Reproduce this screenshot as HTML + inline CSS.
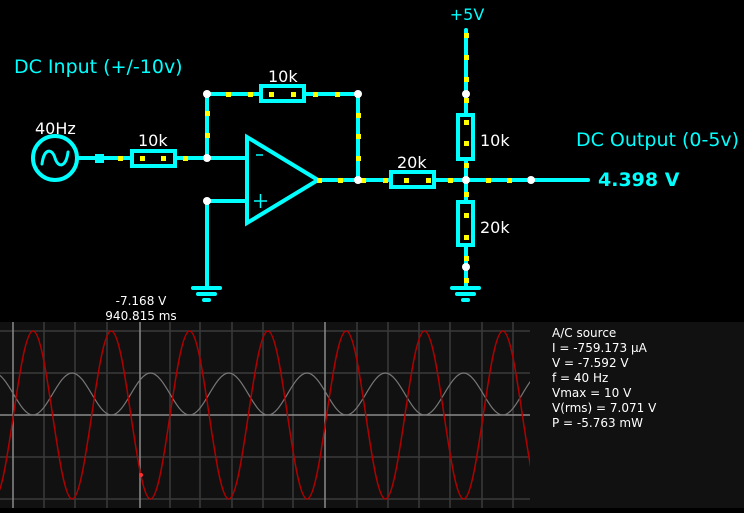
<!DOCTYPE html>
<html><head><meta charset="utf-8">
<style>
html,body{margin:0;padding:0;background:#000;}
body{width:744px;height:508px;overflow:hidden;}
svg text{font-family:"DejaVu Sans","Liberation Sans",sans-serif;}
</style></head><body>
<svg width="744" height="508" viewBox="0 0 744 508" xmlns="http://www.w3.org/2000/svg">
<rect width="744" height="508" fill="#000"/>
<!-- scope -->
<rect x="0" y="322" width="744" height="186" fill="#111"/>
<defs><clipPath id="sc"><rect x="0" y="322" width="530" height="186"/></clipPath></defs>
<g clip-path="url(#sc)">
<g stroke="#3a3a3a" stroke-width="1.5">
<line x1="0" y1="331" x2="530" y2="331"/>
<line x1="0" y1="373" x2="530" y2="373"/>
<line x1="0" y1="457" x2="530" y2="457"/>
<line x1="0" y1="499" x2="530" y2="499"/>
<line x1="44" y1="322" x2="44" y2="508"/>
<line x1="75" y1="322" x2="75" y2="508"/>
<line x1="107" y1="322" x2="107" y2="508"/>
<line x1="170" y1="322" x2="170" y2="508"/>
<line x1="200" y1="322" x2="200" y2="508"/>
<line x1="232" y1="322" x2="232" y2="508"/>
<line x1="263" y1="322" x2="263" y2="508"/>
<line x1="293" y1="322" x2="293" y2="508"/>
<line x1="357" y1="322" x2="357" y2="508"/>
<line x1="388" y1="322" x2="388" y2="508"/>
<line x1="419" y1="322" x2="419" y2="508"/>
<line x1="450" y1="322" x2="450" y2="508"/>
<line x1="482" y1="322" x2="482" y2="508"/>
<line x1="513" y1="322" x2="513" y2="508"/>
</g>
<g stroke="#8a8a8a" stroke-width="1.5">
<line x1="0" y1="415" x2="530" y2="415"/>
<line x1="13" y1="322" x2="13" y2="508"/>
<line x1="140" y1="322" x2="140" y2="508"/>
<line x1="325" y1="322" x2="325" y2="508"/>
</g>
<path fill="none" stroke="#777" stroke-width="1.2" d="M-45.3,415 C-31.1,415 -20.4,373 -6.15,373 S18.8,415 33,415 S58,373 72.15,373 S97.1,415 111.3,415 S136.2,373 150.45,373 S175.4,415 189.6,415 S214.5,373 228.75,373 S253.7,415 267.9,415 S292.8,373 307.05,373 S332,415 346.2,415 S371.1,373 385.35,373 S410.3,415 424.5,415 S449.4,373 463.65,373 S488.6,415 502.8,415 S527.7,373 541.95,373"/>
<path fill="none" stroke="#b00000" stroke-width="1.5" d="M-45.3,331 C-31.1,331 -20.4,499 -6.15,499 S18.8,331 33,331 S58,499 72.15,499 S97.1,331 111.3,331 S136.2,499 150.45,499 S175.4,331 189.6,331 S214.5,499 228.75,499 S253.7,331 267.9,331 S292.8,499 307.05,499 S332,331 346.2,331 S371.1,499 385.35,499 S410.3,331 424.5,331 S449.4,499 463.65,499 S488.6,331 502.8,331 S527.7,499 541.95,499"/>
<circle cx="141" cy="475" r="2" fill="#ff3030"/>
</g>
<g fill="#fff" font-size="12">
<text x="141" y="305" text-anchor="middle">-7.168 V</text>
<text x="141" y="320" text-anchor="middle">940.815 ms</text>
<text x="552" y="337">A/C source</text>
<text x="552" y="352">I = -759.173 μA</text>
<text x="552" y="367">V = -7.592 V</text>
<text x="552" y="382">f = 40 Hz</text>
<text x="552" y="397">Vmax = 10 V</text>
<text x="552" y="412">V(rms) = 7.071 V</text>
<text x="552" y="427">P = -5.763 mW</text>
</g>

<!-- circuit -->
<g stroke="#00ffff" stroke-width="4" fill="none" stroke-linecap="round">
<circle cx="55" cy="158" r="22" stroke-width="4"/>
<path d="M42,164 C44,148 52,148 55,158 C58,168 66,168 68,152" stroke-width="3"/>
<line x1="77" y1="158" x2="207" y2="158"/>
<rect x="132" y="151" width="43" height="15" fill="#000"/>
<line x1="207" y1="94" x2="207" y2="158"/>
<line x1="207" y1="94" x2="358" y2="94"/>
<rect x="261" y="86" width="43" height="15" fill="#000"/>
<line x1="358" y1="94" x2="358" y2="180"/>
<line x1="207" y1="158" x2="247" y2="158"/>
<line x1="207" y1="201" x2="247" y2="201"/>
<line x1="207" y1="201" x2="207" y2="288"/>
<line x1="193" y1="288" x2="220" y2="288"/>
<line x1="198" y1="294" x2="215" y2="294"/>
<line x1="204" y1="300" x2="209" y2="300"/>
<polygon points="247,137 247,223 318,180" stroke-linejoin="miter"/>
<line x1="318" y1="180" x2="588" y2="180"/>
<rect x="391" y="172" width="43" height="15" fill="#000"/>
<line x1="466" y1="30" x2="466" y2="288"/>
<rect x="458" y="115" width="15" height="44" fill="#000"/>
<rect x="458" y="202" width="15" height="43" fill="#000"/>
<line x1="452" y1="288" x2="479" y2="288"/>
<line x1="457" y1="294" x2="474" y2="294"/>
<line x1="463" y1="300" x2="468" y2="300"/>
</g>
<g stroke="#00ffff" stroke-width="1.5">
<line x1="256" y1="155" x2="263" y2="155"/>
<line x1="254" y1="201" x2="267" y2="201"/>
<line x1="260.5" y1="194" x2="260.5" y2="208"/>
</g>
<rect x="95" y="154" width="9" height="9" fill="#00ffff"/>
<g fill="#ffff00">
<rect x="118" y="156" width="5" height="5"/><rect x="140" y="156" width="5" height="5"/><rect x="161" y="156" width="5" height="5"/><rect x="183" y="156" width="5" height="5"/>
<rect x="226" y="92" width="5" height="5"/><rect x="248" y="92" width="5" height="5"/><rect x="269" y="92" width="5" height="5"/><rect x="291" y="92" width="5" height="5"/><rect x="313" y="92" width="5" height="5"/><rect x="335" y="92" width="5" height="5"/>
<rect x="205" y="111" width="5" height="5"/><rect x="205" y="133" width="5" height="5"/>
<rect x="356" y="113" width="5" height="5"/><rect x="356" y="134" width="5" height="5"/><rect x="356" y="156" width="5" height="5"/>
<rect x="317" y="178" width="5" height="5"/><rect x="338" y="178" width="5" height="5"/><rect x="361" y="178" width="5" height="5"/><rect x="383" y="178" width="5" height="5"/><rect x="404" y="178" width="5" height="5"/><rect x="426" y="178" width="5" height="5"/><rect x="448" y="178" width="5" height="5"/><rect x="486" y="178" width="5" height="5"/><rect x="507" y="178" width="5" height="5"/>
<rect x="464" y="33" width="5" height="5"/><rect x="464" y="55" width="5" height="5"/><rect x="464" y="77" width="5" height="5"/><rect x="464" y="98" width="5" height="5"/><rect x="464" y="120" width="5" height="5"/><rect x="464" y="141" width="5" height="5"/><rect x="464" y="163" width="5" height="5"/><rect x="464" y="192" width="5" height="5"/><rect x="464" y="213" width="5" height="5"/><rect x="464" y="235" width="5" height="5"/><rect x="464" y="256" width="5" height="5"/><rect x="464" y="278" width="5" height="5"/>
</g>
<g fill="#fff">
<circle cx="207" cy="94" r="4"/><circle cx="358" cy="94" r="4"/><circle cx="207" cy="158" r="4"/><circle cx="207" cy="201" r="4"/>
<circle cx="358" cy="180" r="4"/><circle cx="466" cy="180" r="4"/><circle cx="531" cy="180" r="4"/><circle cx="466" cy="94" r="4"/><circle cx="466" cy="267" r="4"/>
</g>
<g fill="#00ffff">
<text x="467" y="20" font-size="16" text-anchor="middle">+5V</text>
<text x="14" y="73" font-size="19">DC Input (+/-10v)</text>
<text x="576" y="146" font-size="19">DC Output (0-5v)</text>
<text x="598" y="186" font-size="19" font-weight="bold">4.398 V</text>
</g>
<g fill="#fff" font-size="16">
<text x="35" y="134">40Hz</text>
<text x="138" y="146">10k</text>
<text x="268" y="82">10k</text>
<text x="397" y="168">20k</text>
<text x="480" y="146">10k</text>
<text x="480" y="233">20k</text>
</g>
</svg>
</body></html>
